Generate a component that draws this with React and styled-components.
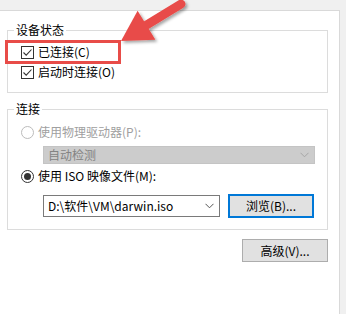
import React from "react";
import styled, { createGlobalStyle } from "styled-components";

const GlobalStyle = createGlobalStyle`
  html, body { margin: 0; padding: 0; }
  body {
    background: #f0f0f0;
    font-family: "Noto Sans CJK SC", "Noto Sans", sans-serif;
    font-size: 12px;
    color: #000;
    width: 346px;
    height: 314px;
    overflow: hidden;
  }
  * { box-sizing: border-box; }
`;

const Page = styled.div`
  position: relative;
  width: 346px;
  height: 314px;
  padding-top: 10px;
`;

const Panel = styled.div`
  width: 340px;
  height: 304px;
  background: #fff;
  border-top: 1px solid #d9d9d9;
  border-right: 1px solid #d9d9d9;
  padding: 11px 11px 0 7px;
  display: flex;
  flex-direction: column;
`;

const Group = styled.fieldset`
  margin: ${(p) => p.$mt || 0}px 0 0 0;
  border: 1px solid #dcdcdc;
  padding: ${(p) => p.$pt}px 12px ${(p) => p.$pb}px 6px;
  min-width: 0;
`;

const Legend = styled.legend`
  padding: 0 2px;
  font-size: 12px;
  line-height: 16px;
  height: 16px;
`;

const Rows = styled.div`
  padding-left: 7px;
  display: flex;
  flex-direction: column;
`;

const Row = styled.label`
  height: 20px;
  display: flex;
  align-items: center;
  gap: 4px;
  line-height: 16px;
  margin-top: ${(p) => p.$mt || 0}px;
  color: ${(p) => (p.$disabled ? "#a0a0a0" : "#000")};
  white-space: nowrap;
`;

const CheckBox = styled.span`
  width: 13px;
  height: 13px;
  border: 1px solid #333;
  background: #fff;
  display: flex;
  align-items: center;
  justify-content: center;
  flex: none;
`;

const Radio = styled.span`
  width: 13px;
  height: 13px;
  border-radius: 50%;
  border: 1px solid ${(p) => (p.$disabled ? "#bcbcbc" : "#333")};
  background: #fff;
  display: flex;
  align-items: center;
  justify-content: center;
  flex: none;
  &::after {
    content: "";
    display: ${(p) => (p.$checked ? "block" : "none")};
    width: 7px;
    height: 7px;
    border-radius: 50%;
    background: #333;
  }
`;

const Combo = styled.div`
  height: 22px;
  margin-left: ${(p) => p.$ml || 0}px;
  margin-top: ${(p) => p.$mt || 0}px;
  flex: 1;
  display: flex;
  align-items: center;
  justify-content: space-between;
  padding: 0 5px 0 4px;
  border: 1px solid ${(p) => (p.$disabled ? "#c4c4c4" : "#7a7a7a")};
  background: ${(p) => (p.$disabled ? "#cccccc" : "#fff")};
  color: ${(p) => (p.$disabled ? "#838383" : "#000")};
  line-height: 16px;
  white-space: nowrap;
`;

const FileRow = styled.div`
  display: flex;
  align-items: center;
  height: 24px;
  margin: 8px 1px 0 22px;
  gap: 8px;
`;

const Button = styled.div`
  width: 86px;
  height: ${(p) => (p.$default ? 24 : 23)}px;
  flex: none;
  display: flex;
  align-items: center;
  justify-content: center;
  background: #e1e1e1;
  border: ${(p) => (p.$default ? "2px solid #0078d7" : "1px solid #adadad")};
  line-height: 16px;
  white-space: nowrap;
`;

const Footer = styled.div`
  display: flex;
  justify-content: flex-end;
  margin-top: 9px;
`;

const Annotation = styled.svg`
  position: absolute;
  left: 0;
  top: 0;
  pointer-events: none;
  overflow: visible;
`;

const Chevron = ({ color }) => (
  <svg width="9" height="6" viewBox="0 0 9 6">
    <path d="M0.5 0.8 L4.5 4.8 L8.5 0.8" fill="none" stroke={color} strokeWidth="1" />
  </svg>
);

const Check = () => (
  <svg width="11" height="11" viewBox="0 0 11 11">
    <path d="M1.5 5.5 L4.2 8.2 L9.5 2.5" fill="none" stroke="#333" strokeWidth="1.1" />
  </svg>
);

export default function App() {
  return (
    <>
      <GlobalStyle />
      <Page>
        <Panel>
          <Group $pt={4} $pb={10}>
            <Legend>设备状态</Legend>
            <Rows>
              <Row>
                <CheckBox><Check /></CheckBox>
                <span>已连接(C)</span>
              </Row>
              <Row>
                <CheckBox><Check /></CheckBox>
                <span>启动时连接(O)</span>
              </Row>
            </Rows>
          </Group>
          <Group $mt={8} $pt={5} $pb={11}>
            <Legend>连接</Legend>
            <Rows>
              <Row $disabled>
                <Radio $disabled />
                <span>使用物理驱动器(P):</span>
              </Row>
              <Combo $disabled $ml={22} $mt={4}>
                <span>自动检测</span>
                <Chevron color="#a6a6a6" />
              </Combo>
              <Row $mt={2}>
                <Radio $checked />
                <span>使用 ISO 映像文件(M):</span>
              </Row>
              <FileRow>
                <Combo>
                  <span>D:\软件\VM\darwin.iso</span>
                  <Chevron color="#555" />
                </Combo>
                <Button $default>浏览(B)...</Button>
              </FileRow>
            </Rows>
          </Group>
          <Footer>
            <Button>高级(V)...</Button>
          </Footer>
        </Panel>
        <Annotation width="200" height="70" viewBox="0 0 200 70">
          <defs>
            <filter id="sh" x="-20%" y="-20%" width="140%" height="140%">
              <feDropShadow dx="2" dy="2" stdDeviation="1.5" floodColor="#000" floodOpacity="0.35" />
            </filter>
          </defs>
          <rect x="6.5" y="41.5" width="113" height="21" fill="none" stroke="#e84c48" strokeWidth="3" />
          <g filter="url(#sh)">
            <line x1="181" y1="4" x2="140" y2="29" stroke="#e84c48" strokeWidth="9" strokeLinecap="round" />
            <polygon points="121,41 137.6,10.8 155.4,39.8" fill="#e84c48" />
          </g>
        </Annotation>
      </Page>
    </>
  );
}
